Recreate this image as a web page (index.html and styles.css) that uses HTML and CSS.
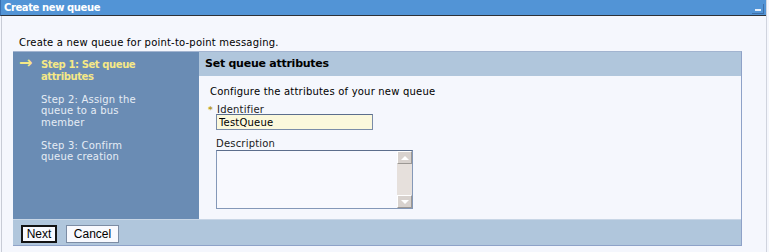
FILE: index.html
```html
<!DOCTYPE html>
<html lang="en">
<head>
    <meta charset="UTF-8">
    <title>Create new queue</title>
    <link rel="stylesheet" href="styles.css">
</head>
<body>
    <div class="portlet">
        <div class="titlebar">
            <span class="title">Create new queue</span>
            <span class="minimize"><span class="dash"></span></span>
        </div>
        <div class="portlet-body">
            <p class="intro">Create a new queue for point-to-point messaging.</p>
            <div class="wizard">
                <div class="wizard-main">
                    <ul class="steps">
                        <li class="current"><span class="arrow">&rarr;</span>Step 1: Set queue attributes</li>
                        <li>Step 2: Assign the queue to a bus member</li>
                        <li>Step 3: Confirm queue creation</li>
                    </ul>
                    <div class="panel">
                        <div class="panel-head">Set queue attributes</div>
                        <div class="panel-body">
                            <p class="hint">Configure the attributes of your new queue</p>
                            <label class="field-label required"><span class="star">*</span>Identifier</label>
                            <input class="text-input" type="text" value="TestQueue">
                            <label class="field-label">Description</label>
                            <div class="textarea">
                                <div class="textarea-text"></div>
                                <div class="scrollbar">
                                    <span class="scroll-btn up"></span>
                                    <span class="scroll-track"></span>
                                    <span class="scroll-btn down"></span>
                                </div>
                            </div>
                        </div>
                    </div>
                </div>
                <div class="button-bar">
                    <button class="btn default">Next</button>
                    <button class="btn">Cancel</button>
                </div>
            </div>
        </div>
    </div>
</body>
</html>
```

FILE: styles.css
```css
body {
    margin: 0;
    padding: 0;
    font-family: 'DejaVu Sans', Verdana, sans-serif;
    font-size: 10px;
    letter-spacing: 0.2px;
    background-color: #F5F7FD;
    color: #000000;
}
.portlet {
    width: 767px;
    height: 252px;
    border-right: 1px solid #D0D4DE;
    box-sizing: border-box;
}
.titlebar {
    height: 15px;
    background-color: #5294D6;
    border-left: 1px solid #3A70B0;
    border-bottom: 1px solid #2E3238;
    display: flex;
    justify-content: space-between;
    align-items: center;
    padding: 0 2px 0 3px;
}
.title {
    color: #FFFFFF;
    font-weight: bold;
    font-size: 10px;
    letter-spacing: -0.4px;
    line-height: 15px;
}
.minimize {
    width: 12px;
    height: 10px;
    margin-top: 2px;
    border-right: 1px solid #3E6FA8;
    border-bottom: 1px solid #3E6FA8;
    display: flex;
    align-items: flex-end;
    justify-content: flex-end;
    padding: 0 2px 2px 0;
    box-sizing: border-box;
}
.minimize .dash {
    width: 6px;
    height: 2px;
    background-color: #E8F0FA;
}
.portlet-body {
    border-left: 1px solid #C8CCD6;
    height: 236px;
    margin-left: 1px;
    padding: 0 0 0 11px;
}
.intro {
    margin: 0;
    padding: 19px 0 0 6px;
    height: 16px;
    line-height: 16px;
}
.wizard {
    width: 729px;
    border-top: 1px solid #A2B4D0;
    border-right: 1px solid #8EA2C8;
    border-bottom: 1px solid #8EA2C8;
    box-sizing: border-box;
}
.wizard-main {
    display: flex;
    height: 167px;
}
.steps {
    list-style: none;
    margin: 0;
    padding: 7px 56px 0 28px;
    width: 186px;
    box-sizing: border-box;
    background-color: #6A8CB4;
    color: #E6ECF4;
    line-height: 11.5px;
}
.steps li {
    margin-bottom: 11.5px;
    position: relative;
}
.steps li.current {
    color: #F6E886;
    font-weight: bold;
    letter-spacing: -0.4px;
}
.steps .arrow {
    position: absolute;
    left: -22px;
    top: -2px;
    font-size: 16px;
    font-weight: bold;
    letter-spacing: 0;
    color: #F6E886;
}
.panel {
    flex: 1;
    display: flex;
    flex-direction: column;
}
.panel-head {
    height: 24px;
    line-height: 24px;
    background-color: #B0C6DC;
    font-weight: bold;
    font-size: 11px;
    letter-spacing: -0.25px;
    padding-left: 6px;
}
.panel-body {
    flex: 1;
    background-color: #F5F7FD;
    padding: 10px 0 0 9px;
}
.hint {
    margin: 0 0 6px 2px;
    line-height: 12px;
}
.field-label {
    display: block;
    line-height: 11px;
    margin-left: 8px;
    color: #1A1A1A;
}
.field-label.required {
    margin-left: 0;
}
.star {
    color: #B89A20;
    font-weight: bold;
    display: inline-block;
    width: 9px;
    font-size: 9px;
}
.text-input {
    display: block;
    margin: -2px 0 8px 8px;
    width: 157px;
    height: 16px;
    box-sizing: border-box;
    border: 1px solid #7A8CA8;
    border-top-color: #5C6E8C;
    background-color: #FBF8DC;
    font-family: 'DejaVu Sans', Verdana, sans-serif;
    font-size: 10px;
    letter-spacing: 0.2px;
    padding: 0 2px;
}
.textarea {
    margin: 1px 0 0 8px;
    width: 197px;
    height: 59px;
    box-sizing: border-box;
    border: 1px solid #8498B8;
    border-top-color: #5C6E8C;
    background-color: #F8F9FE;
    display: flex;
}
.textarea-text {
    flex: 1;
}
.scrollbar {
    width: 15px;
    display: flex;
    flex-direction: column;
    background-color: #E6E0DC;
}
.scroll-track {
    flex: 1;
}
.scroll-btn {
    height: 13px;
    box-sizing: border-box;
    border: 1px solid #9C9894;
    border-top-color: #FFFFFF;
    border-left-color: #FFFFFF;
    background-color: #D8D2CE;
    display: flex;
    align-items: center;
    justify-content: center;
}
.scroll-btn::after {
    content: "";
    width: 0;
    height: 0;
    border-left: 4px solid transparent;
    border-right: 4px solid transparent;
}
.scroll-btn.up::after {
    border-bottom: 4px solid #FFFFFF;
}
.scroll-btn.down::after {
    border-top: 4px solid #FFFFFF;
}
.button-bar {
    height: 26px;
    background-color: #B0C6DC;
    border-top: 1px solid #C8D6E6;
    box-sizing: border-box;
    display: flex;
    align-items: center;
    padding: 2px 0 0 8px;
    gap: 9px;
}
.btn {
    font-family: 'Liberation Sans', Arial, sans-serif;
    font-size: 12px;
    letter-spacing: 0;
    height: 18px;
    padding: 0 4px;
    background-color: #F8F9FE;
    border: 1px solid #7C8CA4;
    color: #000000;
    line-height: 14px;
}
.btn.default {
    width: 36px;
    border: 2px solid #141414;
    padding: 0;
}
.btn:last-child {
    width: 53px;
}
```
